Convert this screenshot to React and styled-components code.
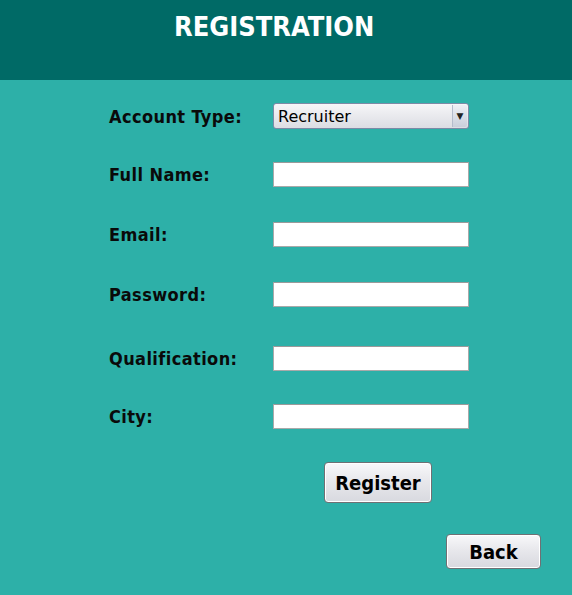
import React from "react";
import styled, { createGlobalStyle } from "styled-components";

const GlobalStyle = createGlobalStyle`
  html, body {
    margin: 0;
    padding: 0;
    background: #2db0a8;
  }
  body {
    font-family: "DejaVu Sans Condensed", "DejaVu Sans", Tahoma, sans-serif;
  }
`;

const Page = styled.div`
  width: 572px;
  height: 595px;
  background: #2db0a8;
  overflow: hidden;
`;

const Header = styled.header`
  height: 80px;
  background: #006a66;
  padding-left: 174px;
  box-sizing: border-box;
`;

const Title = styled.h1`
  margin: 0;
  padding-top: 11px;
  color: #fff;
  font-size: 27px;
  font-weight: bold;
  line-height: 32px;
`;

const Form = styled.div`
  display: grid;
  grid-template-columns: 164px 196px;
  margin-left: 109px;
  padding-top: 23px;
`;

const Row = styled.div`
  display: contents;
`;

const Label = styled.label`
  display: flex;
  align-items: center;
  color: #0a0a0a;
  font-size: 18px;
  font-weight: bold;
  letter-spacing: 0.4px;
  margin-top: ${(p) => p.$gap}px;
`;

const Input = styled.input`
  box-sizing: border-box;
  width: 196px;
  height: 25px;
  margin: ${(p) => p.$gap}px 0 0 0;
  border: 1px solid #a9a9a9;
  border-top-color: #9a9a9a;
  background: #fff;
  padding: 0 4px;
  outline: none;
`;

const Select = styled.div`
  box-sizing: border-box;
  width: 196px;
  height: 26px;
  border: 1px solid #7d8aa6;
  border-radius: 3px;
  background: linear-gradient(#f6f6f8, #dcdde3);
  display: flex;
  align-items: center;
  justify-content: space-between;
  font-family: "DejaVu Sans", sans-serif;
  font-size: 16px;
  color: #000;
  padding-left: 4px;
`;

const Arrow = styled.span`
  width: 14px;
  height: 22px;
  margin-right: 1px;
  border-left: 1px solid #b4bccc;
  border-radius: 0 2px 2px 0;
  background: linear-gradient(#eef0f5, #c9cfdb);
  display: flex;
  align-items: center;
  justify-content: center;
  font-size: 9px;
  color: #222;
`;

const Button = styled.button`
  box-sizing: border-box;
  height: ${(p) => p.$h}px;
  width: ${(p) => p.$w}px;
  border: 1px solid #6f7074;
  border-radius: 4px;
  background: linear-gradient(#f8f8fa, #e8e8ec 45%, #d8d9df);
  font-family: inherit;
  font-size: 20px;
  font-weight: bold;
  color: #000;
  padding: 0;
  box-shadow: inset 0 0 0 1px #fff;
`;

const Actions = styled.div`
  display: flex;
  flex-direction: column;
  padding-top: 33px;
`;

const RegisterWrap = styled.div`
  padding-left: 324px;
`;

const BackWrap = styled.div`
  display: flex;
  justify-content: flex-end;
  padding-right: 31px;
  margin-top: 31px;
`;

const fields = [
  { label: "Full Name:", gap: 33 },
  { label: "Email:", gap: 35 },
  { label: "Password:", gap: 35 },
  { label: "Qualification:", gap: 39 },
  { label: "City:", gap: 33 },
];

export default function App() {
  return (
    <Page>
      <GlobalStyle />
      <Header>
        <Title>REGISTRATION</Title>
      </Header>
      <Form>
        <Row>
          <Label $gap={0}>Account Type:</Label>
          <Select>
            Recruiter
            <Arrow>▼</Arrow>
          </Select>
        </Row>
        {fields.map((f) => (
          <Row key={f.label}>
            <Label $gap={f.gap}>{f.label}</Label>
            <Input $gap={f.gap} />
          </Row>
        ))}
      </Form>
      <Actions>
        <RegisterWrap>
          <Button $w={108} $h={41}>Register</Button>
        </RegisterWrap>
        <BackWrap>
          <Button $w={95} $h={35}>Back</Button>
        </BackWrap>
      </Actions>
    </Page>
  );
}
